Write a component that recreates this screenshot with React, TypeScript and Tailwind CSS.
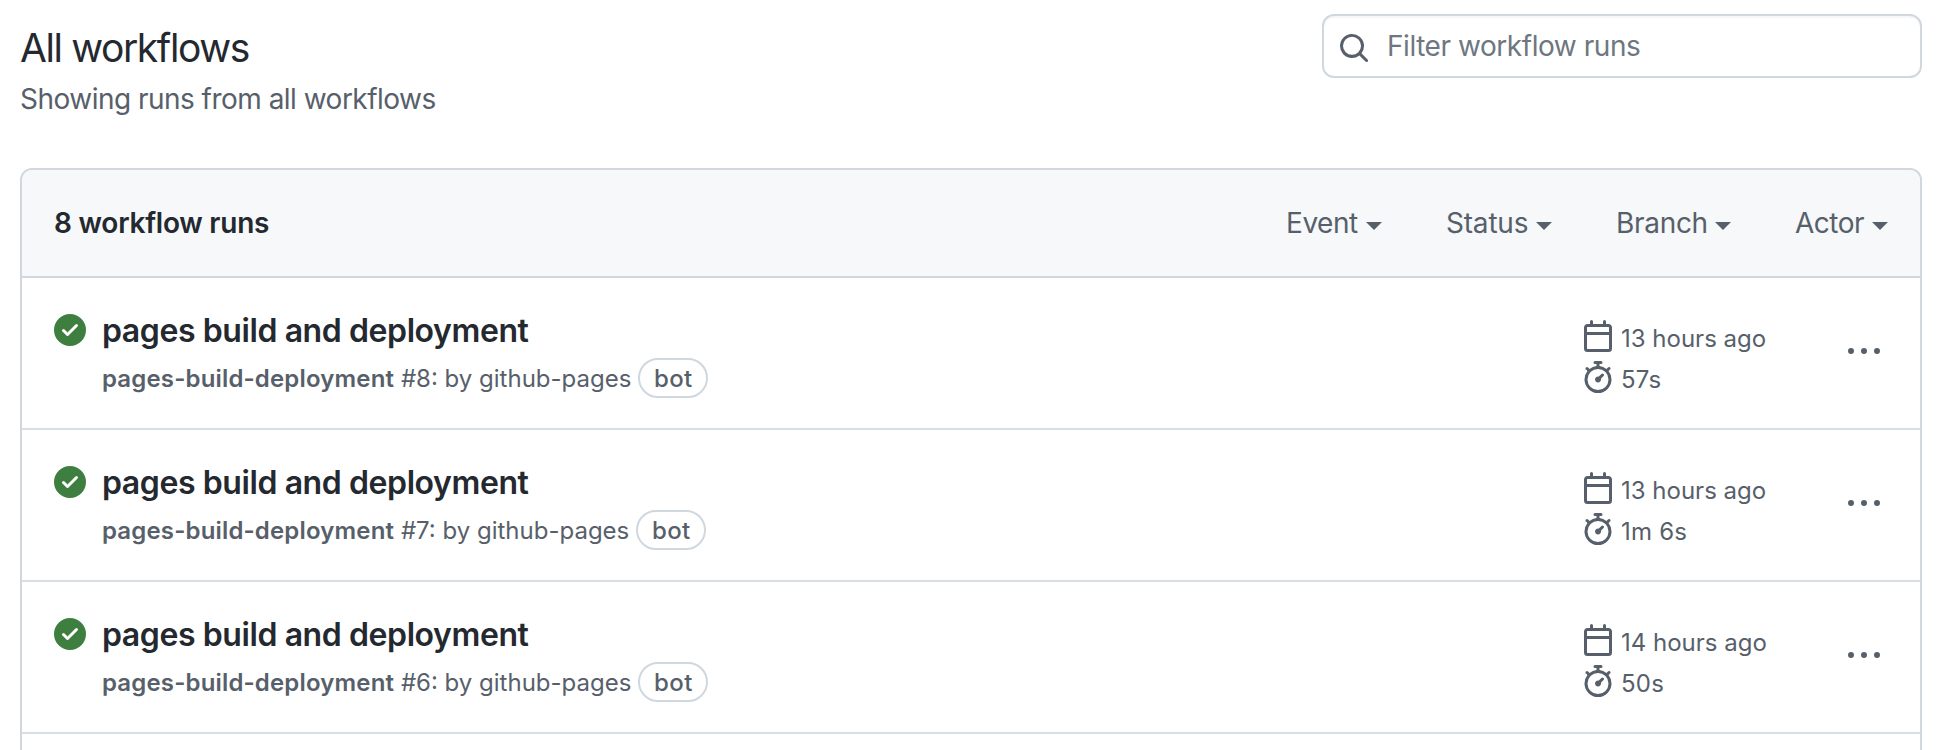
import React from "react";

const ICONS = {
  search:
    "M10.68 11.74a6 6 0 0 1-7.922-8.982 6 6 0 0 1 8.982 7.922l3.04 3.04a.749.749 0 0 1-.326 1.275.749.749 0 0 1-.734-.215ZM11.5 7a4.499 4.499 0 1 0-8.997 0A4.499 4.499 0 0 0 11.5 7Z",
  check:
    "M8 16A8 8 0 1 1 8 0a8 8 0 0 1 0 16Zm3.78-9.72a.751.751 0 0 0-.018-1.042.751.751 0 0 0-1.042-.018L6.75 9.19 5.28 7.72a.751.751 0 0 0-1.042.018.751.751 0 0 0-.018 1.042l2 2a.75.75 0 0 0 1.06 0Z",
  calendar:
    "M4.75 0a.75.75 0 0 1 .75.75V2h5V.75a.75.75 0 0 1 1.5 0V2h1.25c.966 0 1.75.784 1.75 1.75v10.5A1.75 1.75 0 0 1 13.25 16H2.75A1.75 1.75 0 0 1 1 14.25V3.75C1 2.784 1.784 2 2.75 2H4V.75A.75.75 0 0 1 4.75 0ZM2.5 7.5v6.75c0 .138.112.25.25.25h10.5a.25.25 0 0 0 .25-.25V7.5Zm10.75-4H2.75a.25.25 0 0 0-.25.25V6h11V3.75a.25.25 0 0 0-.25-.25Z",
  stopwatch:
    "M5.75.75A.75.75 0 0 1 6.5 0h3a.75.75 0 0 1 0 1.5h-.75v1l-.001.041a6.724 6.724 0 0 1 3.464 1.435l.007-.006.75-.75a.749.749 0 0 1 1.275.326.749.749 0 0 1-.215.734l-.75.75-.006.007a6.75 6.75 0 1 1-10.548 0L2.72 5.03l-.75-.75a.751.751 0 0 1 .018-1.042.751.751 0 0 1 1.042-.018l.75.75.007.006A6.72 6.72 0 0 1 7.25 2.541V1.5H6.5a.75.75 0 0 1-.75-.75ZM8 14.5a5.25 5.25 0 1 0-.001-10.501A5.25 5.25 0 0 0 8 14.5Zm.389-6.7 1.33-1.33a.75.75 0 1 1 1.061 1.06L9.45 8.861A1.503 1.503 0 0 1 8 10.75a1.499 1.499 0 1 1 .389-2.95Z",
  kebab:
    "M8 9a1.5 1.5 0 1 0 0-3 1.5 1.5 0 0 0 0 3ZM1.5 9a1.5 1.5 0 1 0 0-3 1.5 1.5 0 0 0 0 3Zm13 0a1.5 1.5 0 1 0 0-3 1.5 1.5 0 0 0 0 3Z",
};

function Icon({ name, className = "" }: { name: keyof typeof ICONS; className?: string }) {
  return (
    <svg viewBox="0 0 16 16" fill="currentColor" className={`size-8 shrink-0 ${className}`} aria-hidden="true">
      <path d={ICONS[name]} />
    </svg>
  );
}

const filters = [
  { label: "Event", className: "w-[96px] tracking-[-0.45px]" },
  { label: "Status", className: "w-[106px] tracking-[-0.2px]" },
  { label: "Branch", className: "w-[115px] tracking-[-0.3px]" },
  { label: "Actor", className: "w-[93px] tracking-[-0.5px]" },
];

const runs = [
  { number: 8, age: "13 hours ago", duration: "57s" },
  { number: 7, age: "13 hours ago", duration: "1m 6s" },
  { number: 6, age: "14 hours ago", duration: "50s" },
];

function Filter({ label, className }: { label: string; className: string }) {
  return (
    <button type="button" className={`flex items-center justify-between ${className}`}>
      {label}
      <svg viewBox="0 0 16 8" fill="currentColor" className="mt-1.5 h-2 w-4 shrink-0" aria-hidden="true">
        <path d="M0 0h16L8 8Z" />
      </svg>
    </button>
  );
}

function Run({ number, age, duration }: (typeof runs)[number]) {
  return (
    <li className="flex h-[152px] items-start border-b-2 border-[#d8dee4] pr-10 pl-8">
      <Icon name="check" className="mt-9 text-[#3e7f40]" />
      <div className="ml-4 flex-1 pt-[29px]">
        <a className="block text-[32px] leading-[48px] font-semibold tracking-[-0.41px]">pages build and deployment</a>
        <div className="mt-[3px] flex h-10 items-center text-2xl text-[#57606a]">
          <span className="pt-0.5 whitespace-pre">
            <span className="font-semibold tracking-[0.16px]">pages-build-deployment</span>
            {` #${number}: by github-pages`}
          </span>
          <span className="ml-[7px] flex h-10 w-[70px] items-center justify-center rounded-full border-2 border-[#d0d7de] pt-0.5 font-medium tracking-[0.4px]">
            bot
          </span>
        </div>
      </div>
      <div className="mt-[42px] w-[266px] text-2xl text-[#57606a]">
        <div className="flex h-[41px] items-start gap-[7px]">
          <Icon name="calendar" />
          <span className="leading-[37px]">{age}</span>
        </div>
        <div className="flex h-[41px] items-start gap-[7px]">
          <Icon name="stopwatch" />
          <span className="leading-[37px] tracking-[0.2px]">{duration}</span>
        </div>
      </div>
      <Icon name="kebab" className="mt-[58px] text-[#57606a]" />
    </li>
  );
}

export default function App() {
  return (
    <div className="h-[750px] overflow-hidden bg-white pr-[22px] pl-5 font-['Inter',sans-serif] text-[#24292f]">
      <header className="flex items-start justify-between">
        <div className="pt-[18px]">
          <h1 className="text-[39px] leading-[60px] tracking-[-1.4px]">All workflows</h1>
          <p className="text-[28px] leading-[42px] tracking-[-0.52px] text-[#57606a]">Showing runs from all workflows</p>
        </div>
        <label className="mt-3.5 flex h-16 w-[600px] items-center rounded-xl border-2 border-[#d0d7de] pl-3.5 shadow-[inset_0_2px_0_rgba(208,215,222,0.2)]">
          <Icon name="search" className="mt-1 text-[#57606a]" />
          <span className="ml-[17px] text-[28px] tracking-[-0.45px] text-[#6e7781]">Filter workflow runs</span>
        </label>
      </header>
      <section className="mt-12 h-[700px] overflow-hidden rounded-xl border-2 border-[#d0d7de]">
        <div className="flex h-[108px] items-center justify-between border-b-2 border-[#d0d7de] bg-[#f6f8fa] px-8 text-[28px]">
          <h2 className="font-semibold tracking-[-0.24px]">8 workflow runs</h2>
          <div className="flex gap-16 text-[#57606a]">
            {filters.map((f) => (
              <Filter key={f.label} {...f} />
            ))}
          </div>
        </div>
        <ul>
          {runs.map((r) => (
            <Run key={r.number} {...r} />
          ))}
        </ul>
      </section>
    </div>
  );
}
